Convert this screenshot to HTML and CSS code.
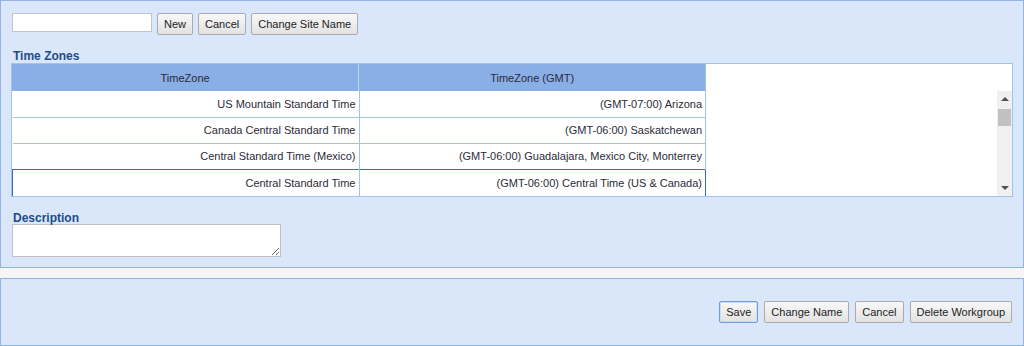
FILE: index.html
```html
<!DOCTYPE html>
<html>
<head>
<meta charset="utf-8">
<link rel="stylesheet" href="styles.css">
</head>
<body>
<div class="panel panel-main">
  <div class="toolbar">
    <input class="site-input" type="text">
    <button class="btn">New</button>
    <button class="btn">Cancel</button>
    <button class="btn">Change Site Name</button>
  </div>
  <div class="label label-tz">Time Zones</div>
  <div class="grid">
    <table class="grid-head">
      <tr><th>TimeZone</th><th>TimeZone (GMT)</th></tr>
    </table>
    <div class="grid-body">
      <div class="rows">
        <table class="grid-rows">
          <tr><td>US Mountain Standard Time</td><td>(GMT-07:00) Arizona</td></tr>
          <tr><td>Canada Central Standard Time</td><td>(GMT-06:00) Saskatchewan</td></tr>
          <tr><td>Central Standard Time (Mexico)</td><td>(GMT-06:00) Guadalajara, Mexico City, Monterrey</td></tr>
          <tr class="selected"><td>Central Standard Time</td><td>(GMT-06:00) Central Time (US &amp; Canada)</td></tr>
        </table>
      </div>
      <div class="scrollbar">
        <div class="arrow arrow-up"></div>
        <div class="thumb-track"><div class="thumb"></div></div>
        <div class="arrow arrow-down"></div>
      </div>
    </div>
  </div>
  <div class="label label-desc">Description</div>
  <textarea class="desc"></textarea>
</div>
<div class="panel panel-actions">
  <button class="btn btn-focus">Save</button>
  <button class="btn">Change Name</button>
  <button class="btn">Cancel</button>
  <button class="btn">Delete Workgroup</button>
</div>
</body>
</html>
```

FILE: styles.css
```css
html, body {
  margin: 0;
  padding: 0;
  background: #f5f5f5;
  font-family: "Liberation Sans", Arial, sans-serif;
  font-size: 11px;
  color: #2b2b3a;
}
.panel {
  background: #dae6f9;
  border: 1px solid #92b4e5;
  box-sizing: border-box;
  width: 1024px;
}
.panel-main {
  padding: 12px 11px 10px 11px;
  height: 268px;
}
.toolbar {
  display: flex;
  align-items: flex-start;
  gap: 5px;
}
.site-input {
  width: 140px;
  height: 19px;
  box-sizing: border-box;
  margin: 0;
  border: 1px solid #c3c3c3;
  background: #fff;
  padding: 0 3px;
}
.btn {
  font-family: "Liberation Sans", Arial, sans-serif;
  font-size: 11px;
  color: #222;
  height: 22px;
  padding: 0 6px;
  margin: 0;
  border: 1px solid #ababab;
  border-radius: 2px;
  background: linear-gradient(#f8f8f8, #e2e2e2);
  box-sizing: border-box;
}
.btn-focus {
  border-color: #6d9fd9;
  box-shadow: inset 0 0 0 1px #c9dcf3;
}
.label {
  font-weight: bold;
  font-size: 12px;
  line-height: 14px;
  color: #1d4d8c;
}
.label-tz {
  margin-top: 14px;
  padding-left: 1px;
}
.grid {
  width: 1002px;
  margin-left: -1px;
  box-sizing: border-box;
  border: 1px solid #a3c1ea;
  background: #fff;
}
table {
  border-collapse: collapse;
  table-layout: fixed;
  width: 694px;
}
.grid-head th {
  width: 346px;
  height: 27px;
  padding: 0;
  background: #8aaee6;
  font-weight: normal;
  color: #2b2b3a;
  text-align: center;
  border-right: 1px solid #c4d7f2;
  box-sizing: border-box;
}
.grid-head th:last-child,
.grid-rows td:last-child {
  border-right: 1px solid #a3c1ea;
}
.grid-body {
  display: flex;
  height: 105px;
}
.rows {
  flex: 1;
  overflow: hidden;
}
.grid-rows td {
  width: 346px;
  height: 26px;
  box-sizing: border-box;
  padding: 0 3px 0 0;
  text-align: right;
  white-space: nowrap;
  border-top: 1px solid #a3c1ea;
  border-right: 1px solid #a3c1ea;
}
.grid-rows tr:first-child td {
  border-top: none;
  height: 26px;
}
.grid-rows tr.selected td {
  border-top: 1px solid #3f63d8;
  border-bottom: 1px solid #3f63d8;
  height: 27px;
}
.grid-rows tr.selected td:first-child {
  border-left: 1px solid #3f63d8;
}
.grid-rows tr.selected td:last-child {
  border-right: 1px solid #3f63d8;
}
.scrollbar {
  width: 15px;
  background: #f0f0f0;
  display: flex;
  flex-direction: column;
  align-items: center;
}
.arrow {
  width: 0;
  height: 0;
  border-left: 4px solid transparent;
  border-right: 4px solid transparent;
}
.arrow-up {
  margin-top: 6px;
  border-bottom: 4px solid #505050;
}
.arrow-down {
  margin-bottom: 6px;
  border-top: 4px solid #505050;
}
.thumb-track {
  flex: 1;
  align-self: stretch;
  padding: 8px 1px 0 1px;
}
.thumb {
  height: 17px;
  background: #c1c1c1;
}
.label-desc {
  margin-top: 14px;
  padding-left: 1px;
}
.desc {
  display: block;
  width: 269px;
  height: 33px;
  box-sizing: border-box;
  margin: -1px 0 0 0;
  border: 1px solid #c1c1c1;
  background: #fff;
  resize: both;
}
.panel-actions {
  margin-top: 10px;
  height: 68px;
  display: flex;
  justify-content: flex-end;
  align-items: flex-start;
  gap: 6px;
  padding: 22px 11px 0 0;
}
```
